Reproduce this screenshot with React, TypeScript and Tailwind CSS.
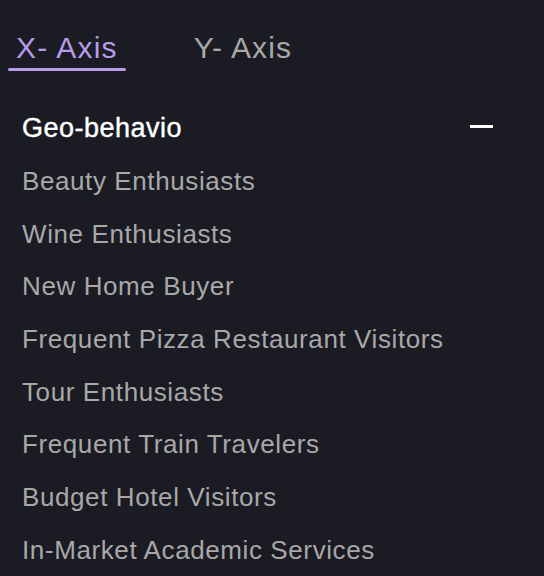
import React from "react";

const items = [
  "Beauty Enthusiasts",
  "Wine Enthusiasts",
  "New Home Buyer",
  "Frequent Pizza Restaurant Visitors",
  "Tour Enthusiasts",
  "Frequent Train Travelers",
  "Budget Hotel Visitors",
  "In-Market Academic Services",
];

export default function App() {
  return (
    <div
      className="w-[544px] h-[576px] overflow-hidden bg-[#1b1b24]"
      style={{ fontFamily: '"Liberation Sans", Arial, sans-serif' }}
    >
      <div className="flex items-end pl-2 pt-[29px] gap-[60px]">
        <div className="flex flex-col items-stretch">
          <div className="px-2 text-[30px] leading-[37px] text-[#b79be8] tracking-[1.2px]">X- Axis</div>
          <div className="mt-[2px] h-[3px] bg-[#b79be8] rounded-full" />
        </div>
        <div className="flex flex-col">
          <div className="px-2 text-[30px] leading-[37px] text-[#a9a9a9] tracking-[1.1px]">Y- Axis</div>
          <div className="mt-[2px] h-[3px]" />
        </div>
      </div>
      <div className="pl-[22px] pr-[51px] mt-[37px]">
        <div className="flex items-center justify-between h-[40px]">
          <span className="text-[27px] text-white tracking-[0.5px] [-webkit-text-stroke:0.4px_white]">
            Geo-behavio
          </span>
          <span className="block w-[23px] h-[3px] bg-white -mt-[3px]" />
        </div>
        <div className="mt-[7px]">
          {items.map((t) => (
            <div key={t} className="h-[52.7px] flex items-center text-[26px] text-[#a8a8a8] tracking-[0.6px]">
              {t}
            </div>
          ))}
        </div>
      </div>
    </div>
  );
}
